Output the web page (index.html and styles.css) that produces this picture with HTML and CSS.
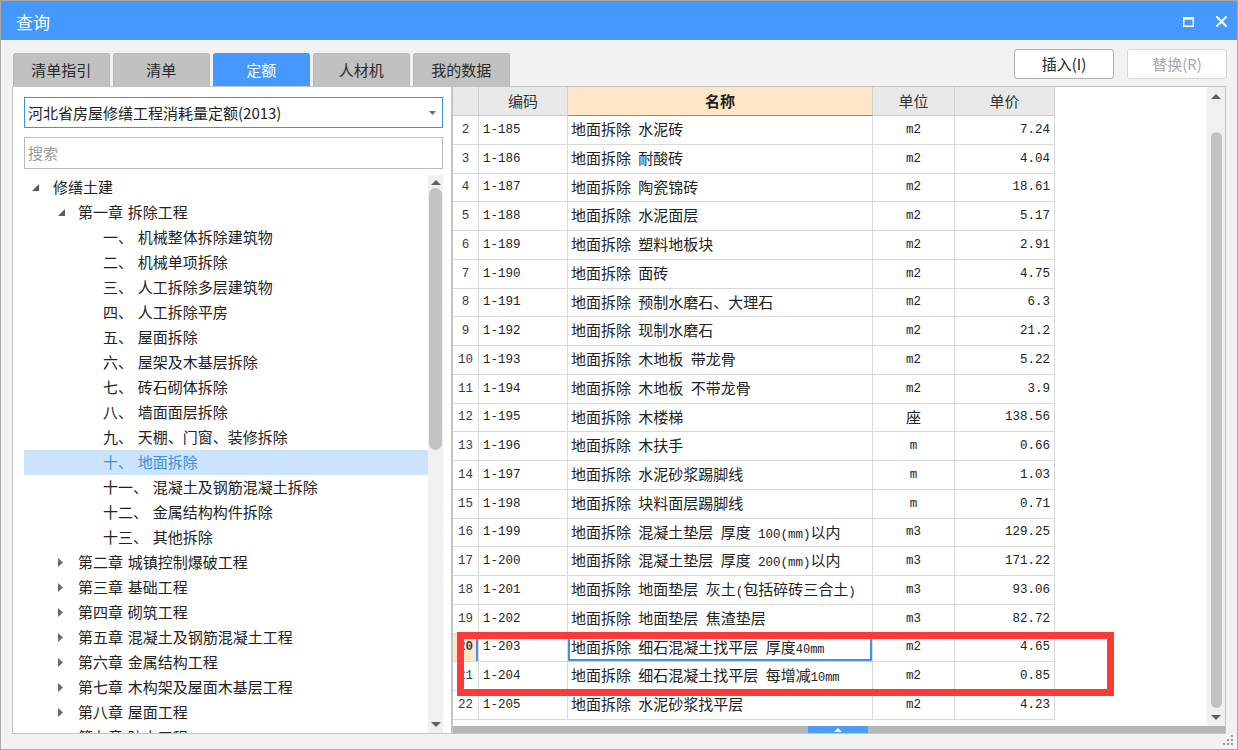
FILE: index.html
```html
<!DOCTYPE html>
<html lang="zh-CN">
<head>
<meta charset="utf-8">
<title>查询</title>
<link rel="stylesheet" href="styles.css">
</head>
<body>
<div class="win">
  <div class="titlebar">
    <span class="title">查询</span>
    <div class="ctl">
      <svg class="ic-max" width="11" height="10" viewBox="0 0 11 10"><rect x="0.75" y="1" width="9.5" height="8.25" fill="none" stroke="#fff" stroke-width="1.5"/><rect x="0" y="0" width="11" height="2.6" fill="#fff"/></svg>
      <svg class="ic-close" width="11" height="11" viewBox="0 0 11 11"><path d="M1 1 L10 10 M10 1 L1 10" stroke="#fff" stroke-width="2" stroke-linecap="square"/></svg>
    </div>
  </div>

  <div class="toolbar">
    <div class="tabs">
      <div class="tab">清单指引</div>
      <div class="tab">清单</div>
      <div class="tab active">定额</div>
      <div class="tab">人材机</div>
      <div class="tab">我的数据</div>
    </div>
    <div class="btns">
      <div class="btn">插入(I)</div>
      <div class="btn disabled">替换(R)</div>
    </div>
  </div>

  <div class="main">
    <div class="left">
      <div class="combo">
        <span>河北省房屋修缮工程消耗量定额(2013)</span>
        <svg class="caret" width="7" height="4" viewBox="0 0 7 4"><polygon points="0,0 7,0 3.5,4" fill="#6e6e6e"/></svg>
      </div>
      <div class="search">搜索</div>
      <div class="tree">
        <div class="tree-list">
          <div class="ti l0"><span class="arw"><svg width="7" height="7" viewBox="0 0 7 7"><polygon points="7,0 7,7 0,7" fill="#5a5a5a"/></svg></span>修缮土建</div>
          <div class="ti l1"><span class="arw"><svg width="7" height="7" viewBox="0 0 7 7"><polygon points="7,0 7,7 0,7" fill="#5a5a5a"/></svg></span>第一章 拆除工程</div>
          <div class="ti l2">一、 机械整体拆除建筑物</div>
          <div class="ti l2">二、 机械单项拆除</div>
          <div class="ti l2">三、 人工拆除多层建筑物</div>
          <div class="ti l2">四、 人工拆除平房</div>
          <div class="ti l2">五、 屋面拆除</div>
          <div class="ti l2">六、 屋架及木基层拆除</div>
          <div class="ti l2">七、 砖石砌体拆除</div>
          <div class="ti l2">八、 墙面面层拆除</div>
          <div class="ti l2">九、 天棚、门窗、装修拆除</div>
          <div class="ti l2 sel">十、 地面拆除</div>
          <div class="ti l2">十一、 混凝土及钢筋混凝土拆除</div>
          <div class="ti l2">十二、 金属结构构件拆除</div>
          <div class="ti l2">十三、 其他拆除</div>
          <div class="ti l1"><span class="arw"><svg width="5" height="9" viewBox="0 0 5 9"><polygon points="0,0 5,4.5 0,9" fill="#6a6a6a"/></svg></span>第二章 城镇控制爆破工程</div>
          <div class="ti l1"><span class="arw"><svg width="5" height="9" viewBox="0 0 5 9"><polygon points="0,0 5,4.5 0,9" fill="#6a6a6a"/></svg></span>第三章 基础工程</div>
          <div class="ti l1"><span class="arw"><svg width="5" height="9" viewBox="0 0 5 9"><polygon points="0,0 5,4.5 0,9" fill="#6a6a6a"/></svg></span>第四章 砌筑工程</div>
          <div class="ti l1"><span class="arw"><svg width="5" height="9" viewBox="0 0 5 9"><polygon points="0,0 5,4.5 0,9" fill="#6a6a6a"/></svg></span>第五章 混凝土及钢筋混凝土工程</div>
          <div class="ti l1"><span class="arw"><svg width="5" height="9" viewBox="0 0 5 9"><polygon points="0,0 5,4.5 0,9" fill="#6a6a6a"/></svg></span>第六章 金属结构工程</div>
          <div class="ti l1"><span class="arw"><svg width="5" height="9" viewBox="0 0 5 9"><polygon points="0,0 5,4.5 0,9" fill="#6a6a6a"/></svg></span>第七章 木构架及屋面木基层工程</div>
          <div class="ti l1"><span class="arw"><svg width="5" height="9" viewBox="0 0 5 9"><polygon points="0,0 5,4.5 0,9" fill="#6a6a6a"/></svg></span>第八章 屋面工程</div>
          <div class="ti l1"><span class="arw"><svg width="5" height="9" viewBox="0 0 5 9"><polygon points="0,0 5,4.5 0,9" fill="#6a6a6a"/></svg></span>第九章 防水工程</div>
        </div>
        <div class="tree-sb">
          <div class="sb-arr"><svg width="10" height="5" viewBox="0 0 10 5"><polygon points="0,5 10,5 5,0" fill="#606060"/></svg></div>
          <div class="tree-thumb"></div>
          <div class="sb-fill"></div>
          <div class="sb-arr dn"><svg width="10" height="5" viewBox="0 0 10 5"><polygon points="0,0 10,0 5,5" fill="#606060"/></svg></div>
        </div>
      </div>
    </div>

    <div class="right">
      <div class="gridwrap">
        <div class="grid">
          <div class="r hd"><div class="c n"></div><div class="c code">编码</div><div class="c name act">名称</div><div class="c unit">单位</div><div class="c price">单价</div></div>
          <div class="r"><div class="c n">2</div><div class="c code">1-185</div><div class="c name">地面拆除 水泥砖</div><div class="c unit">m2</div><div class="c price">7.24</div></div>
          <div class="r"><div class="c n">3</div><div class="c code">1-186</div><div class="c name">地面拆除 耐酸砖</div><div class="c unit">m2</div><div class="c price">4.04</div></div>
          <div class="r"><div class="c n">4</div><div class="c code">1-187</div><div class="c name">地面拆除 陶瓷锦砖</div><div class="c unit">m2</div><div class="c price">18.61</div></div>
          <div class="r"><div class="c n">5</div><div class="c code">1-188</div><div class="c name">地面拆除 水泥面层</div><div class="c unit">m2</div><div class="c price">5.17</div></div>
          <div class="r"><div class="c n">6</div><div class="c code">1-189</div><div class="c name">地面拆除 塑料地板块</div><div class="c unit">m2</div><div class="c price">2.91</div></div>
          <div class="r"><div class="c n">7</div><div class="c code">1-190</div><div class="c name">地面拆除 面砖</div><div class="c unit">m2</div><div class="c price">4.75</div></div>
          <div class="r"><div class="c n">8</div><div class="c code">1-191</div><div class="c name">地面拆除 预制水磨石、大理石</div><div class="c unit">m2</div><div class="c price">6.3</div></div>
          <div class="r"><div class="c n">9</div><div class="c code">1-192</div><div class="c name">地面拆除 现制水磨石</div><div class="c unit">m2</div><div class="c price">21.2</div></div>
          <div class="r"><div class="c n">10</div><div class="c code">1-193</div><div class="c name">地面拆除 木地板 带龙骨</div><div class="c unit">m2</div><div class="c price">5.22</div></div>
          <div class="r"><div class="c n">11</div><div class="c code">1-194</div><div class="c name">地面拆除 木地板 不带龙骨</div><div class="c unit">m2</div><div class="c price">3.9</div></div>
          <div class="r"><div class="c n">12</div><div class="c code">1-195</div><div class="c name">地面拆除 木楼梯</div><div class="c unit cjk">座</div><div class="c price">138.56</div></div>
          <div class="r"><div class="c n">13</div><div class="c code">1-196</div><div class="c name">地面拆除 木扶手</div><div class="c unit">m</div><div class="c price">0.66</div></div>
          <div class="r"><div class="c n">14</div><div class="c code">1-197</div><div class="c name">地面拆除 水泥砂浆踢脚线</div><div class="c unit">m</div><div class="c price">1.03</div></div>
          <div class="r"><div class="c n">15</div><div class="c code">1-198</div><div class="c name">地面拆除 块料面层踢脚线</div><div class="c unit">m</div><div class="c price">0.71</div></div>
          <div class="r"><div class="c n">16</div><div class="c code">1-199</div><div class="c name">地面拆除 混凝土垫层 厚度 <span class="m">100(mm)</span>以内</div><div class="c unit">m3</div><div class="c price">129.25</div></div>
          <div class="r"><div class="c n">17</div><div class="c code">1-200</div><div class="c name">地面拆除 混凝土垫层 厚度 <span class="m">200(mm)</span>以内</div><div class="c unit">m3</div><div class="c price">171.22</div></div>
          <div class="r"><div class="c n">18</div><div class="c code">1-201</div><div class="c name">地面拆除 地面垫层 灰土<span class="m">(</span>包括碎砖三合土<span class="m">)</span></div><div class="c unit">m3</div><div class="c price">93.06</div></div>
          <div class="r"><div class="c n">19</div><div class="c code">1-202</div><div class="c name">地面拆除 地面垫层 焦渣垫层</div><div class="c unit">m3</div><div class="c price">82.72</div></div>
          <div class="r sel"><div class="c n">20</div><div class="c code">1-203</div><div class="c name">地面拆除 细石混凝土找平层 厚度<span class="m s">40mm</span></div><div class="c unit">m2</div><div class="c price">4.65</div></div>
          <div class="r"><div class="c n">21</div><div class="c code">1-204</div><div class="c name">地面拆除 细石混凝土找平层 每增减<span class="m s">10mm</span></div><div class="c unit">m2</div><div class="c price">0.85</div></div>
          <div class="r"><div class="c n">22</div><div class="c code">1-205</div><div class="c name">地面拆除 水泥砂浆找平层</div><div class="c unit">m2</div><div class="c price">4.23</div></div>
        </div>
        <div class="vsb">
          <div class="vsb-up"><svg width="10" height="5" viewBox="0 0 10 5"><polygon points="0,5 10,5 5,0" fill="#606060"/></svg></div>
          <div class="vsb-thumb"></div>
          <div class="vsb-dn"><svg width="10" height="5" viewBox="0 0 10 5"><polygon points="0,0 10,0 5,5" fill="#606060"/></svg></div>
        </div>
      </div>
      <div class="hsb">
        <div class="hsb-thumb"><svg width="8" height="4" viewBox="0 0 8 4"><polygon points="0,4 8,4 4,0" fill="#fff"/></svg></div>
      </div>
      <div class="mark"></div>
    </div>
  </div>

  <svg class="grip" width="12" height="12" viewBox="0 0 12 12">
    <rect x="9" y="1" width="2" height="2" fill="#9a9a9a"/>
    <rect x="5" y="5" width="2" height="2" fill="#9a9a9a"/>
    <rect x="9" y="5" width="2" height="2" fill="#9a9a9a"/>
    <rect x="1" y="9" width="2" height="2" fill="#9a9a9a"/>
    <rect x="5" y="9" width="2" height="2" fill="#9a9a9a"/>
    <rect x="9" y="9" width="2" height="2" fill="#9a9a9a"/>
  </svg>
</div>
</body>
</html>
```

FILE: styles.css
```css
* { box-sizing: border-box; margin: 0; padding: 0; }
html, body { width: 1238px; height: 750px; overflow: hidden; }
body {
  background: #f2f2f2;
  font-family: "Noto Sans CJK SC", "Microsoft YaHei", sans-serif;
  color: #222;
}

.win {
  position: relative;
  width: 1238px;
  height: 750px;
  border: 1px solid #a9a9a9;
  background: #f2f2f2;
  display: flex;
  flex-direction: column;
}

/* title bar */
.titlebar {
  height: 39px;
  flex: none;
  background: #4598fe;
  color: #fff;
  display: flex;
  align-items: center;
  justify-content: space-between;
  padding: 0 10px 0 15px;
}
.title { font-size: 17px; line-height: 20px; padding-top: 2px; }
.ctl { display: flex; align-items: center; gap: 22px; padding-top: 2px; }
.ic-max, .ic-close { display: block; }

/* toolbar */
.toolbar {
  height: 46px;
  flex: none;
  display: flex;
  justify-content: space-between;
  padding: 0 10px 0 12px;
}
.tabs { display: flex; align-self: flex-end; gap: 3.5px; }
.tab {
  width: 96.5px;
  height: 33px;
  background: #c1c1c1;
  border: 1px solid #b6b6b6;
  border-bottom: none;
  border-radius: 3px 3px 0 0;
  font-size: 15px;
  line-height: 32px;
  text-align: center;
  color: #2a2a2a;
}
.tab.active { background: #4598fe; border-color: #4598fe; color: #fff; }

.btns { display: flex; gap: 13px; margin-top: 9px; align-self: flex-start; }
.btn {
  width: 100px;
  height: 30px;
  background: #fff;
  border: 1px solid #adadad;
  border-radius: 3px;
  font-size: 15px;
  line-height: 28px;
  text-align: center;
  color: #222;
}
.btn.disabled { border-color: #d8d8d8; color: #a8a8a8; }

/* main */
.main {
  height: 648px;
  flex: none;
  display: flex;
  padding: 0 11px;
}

/* left panel */
.left {
  width: 440px;
  flex: none;
  background: #fff;
  border: 1px solid #c4c4c4;
  padding: 10px 8px 0 11px;
  display: flex;
  flex-direction: column;
}
.combo {
  height: 31px;
  flex: none;
  border: 1px solid #3d8ef2;
  display: flex;
  align-items: center;
  justify-content: space-between;
  padding: 0 6px 0 3px;
  font-size: 15px;
  line-height: 18px;
  color: #222;
}
.caret { display: block; }
.search {
  margin-top: 9px;
  height: 32px;
  flex: none;
  border: 1px solid #b9b9b9;
  padding-left: 3px;
  font-size: 15px;
  line-height: 30px;
  color: #9a9a9a;
}
.tree {
  margin-top: 6px;
  flex: 1;
  min-height: 0;
  display: flex;
  overflow: hidden;
}
.tree-list { width: 404px; flex: none; }
.ti {
  height: 25px;
  display: flex;
  align-items: center;
  font-size: 15px;
  line-height: 18px;
  word-spacing: 1.5px;
  white-space: nowrap;
  color: #222;
  padding-bottom: 1px;
}
.ti.l0 { padding-left: 8px; }
.ti.l1 { padding-left: 33px; }
.ti.l2 { padding-left: 79px; }
.ti.sel { background: #cce4fb; color: #3a8ee6; }
.arw {
  width: 21px;
  flex: none;
  display: flex;
  align-items: center;
}
.arw svg { display: block; }
.l1 .arw { padding-left: 1px; }

.tree-sb {
  width: 15px;
  flex: none;
  background: #f0f0f0;
  display: flex;
  flex-direction: column;
  align-items: center;
}
.sb-arr { height: 13px; flex: none; display: flex; align-items: center; justify-content: center; padding-top: 1px; }
.sb-arr.dn { height: 14px; padding-top: 0; padding-bottom: 4px; }
.sb-arr svg { display: block; }
.tree-thumb {
  width: 13px;
  height: 262px;
  flex: none;
  background: #c2c2c2;
  border-radius: 7px;
}
.sb-fill { flex: 1; }

/* right panel */
.right {
  position: relative;
  flex: 1;
  background: #fff;
  border: 1px solid #c4c4c4;
  display: flex;
  flex-direction: column;
}
.gridwrap { flex: 1; min-height: 0; display: flex; }
.grid { width: 754px; flex: none; background: #fff; }

.r {
  display: grid;
  grid-template-columns: 26px 89px 305px 82px 100px;
  width: 602px;
  height: 28.75px;
}
.r.hd { height: 29px; }
.c {
  display: flex;
  align-items: center;
  overflow: hidden;
  white-space: nowrap;
  border-right: 1px solid #d9d9d9;
  border-bottom: 1px solid #d9d9d9;
  font-family: "Liberation Mono", "DejaVu Sans Mono", monospace;
  font-size: 12.5px;
  line-height: 16px;
  color: #222;
}
.c.n { justify-content: center; color: #3a3a3a; }
.c.code { padding-left: 4px; }
.c.name {
  display: block;
  padding-left: 3px;
  font-family: "Noto Sans CJK SC", "Microsoft YaHei", sans-serif;
  font-size: 15px;
  line-height: 25px;
  word-spacing: 4px;
}
.c.unit { justify-content: center; }
.c.unit.cjk { font-family: "Noto Sans CJK SC", sans-serif; font-size: 15px; line-height: 18px; }
.c.price { justify-content: flex-end; padding-right: 4px; }
.m { font-family: "Liberation Mono", "DejaVu Sans Mono", monospace; font-size: 12.5px; word-spacing: 0; }
.m.s { font-size: 12px; }

.hd .c {
  display: flex;
  background: #e8e8e8;
  border-color: #cfcfcf;
  justify-content: center;
  padding: 0;
  font-family: "Noto Sans CJK SC", "Microsoft YaHei", sans-serif;
  font-size: 15px;
  line-height: 18px;
  color: #333;
}
.hd .c.act { background: #fee6c7; border-bottom-color: #4a9af0; font-weight: bold; color: #222; }

.sel .c.n { background: #fee6c7; font-weight: bold; box-shadow: inset -2px 0 0 #3f90f2; }
.sel .c.name { box-shadow: inset 0 0 0 2px #3f90f2; }

.vsb {
  width: 18px;
  flex: none;
  background: #f0f0f0;
  display: flex;
  flex-direction: column;
  align-items: center;
}
.vsb-up { height: 16px; flex: none; display: flex; align-items: center; justify-content: center; padding-top: 2px; }
.vsb-up svg, .vsb-dn svg { display: block; }
.vsb-thumb {
  width: 11px;
  height: 576px;
  margin-top: 29px;
  flex: none;
  background: #c3c3c3;
  border-radius: 6px;
}
.vsb-dn { flex: 1; display: flex; align-items: center; justify-content: center; }

.hsb {
  height: 7px;
  flex: none;
  background: #b6b6b6;
  display: flex;
}
.hsb-thumb {
  margin-left: 355px;
  width: 60px;
  height: 7px;
  background: #4a9cf5;
  display: flex;
  align-items: center;
  justify-content: center;
}
.hsb-thumb svg { display: block; }

.mark {
  position: absolute;
  left: 4px;
  top: 545px;
  width: 657px;
  height: 64px;
  border: 7px solid #fd3a3a;
  pointer-events: none;
}

.grip { position: absolute; right: 3px; bottom: 3px; display: block; }
```
